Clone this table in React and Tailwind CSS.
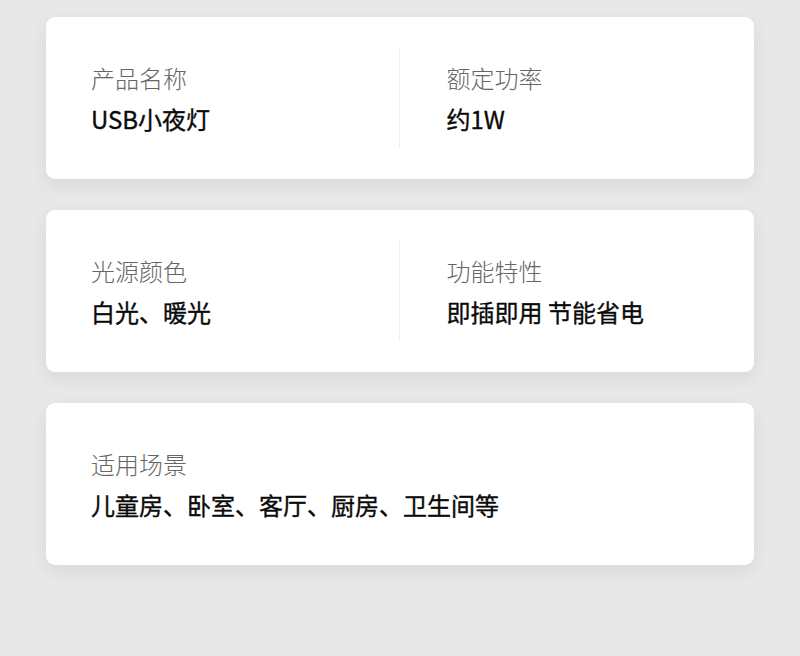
export default function App() {
  const font = { fontFamily: '"Noto Sans CJK SC", "Noto Sans", sans-serif' };
  const Item = ({ label, value, className }) => (
    <div className={"flex flex-col justify-center " + className}>
      <div className="text-[24px] leading-[41px] font-light text-[#666666]">{label}</div>
      <div className="text-[24px] leading-[41px] font-normal text-[#0a0a0a] [-webkit-text-stroke:0.35px_#0a0a0a]">{value}</div>
    </div>
  );
  return (
    <div className="w-[800px] h-[656px] bg-[#e8e8e8] pt-[17px]" style={font}>
      <div className="w-[708px] mx-auto flex flex-col gap-[31px]">
        <div className="h-[162px] bg-white rounded-[9px] shadow-[0_6px_18px_rgba(0,0,0,0.07)] flex items-center">
          <Item label="产品名称" value="USB小夜灯" className="flex-1 pl-[45px]" />
          <div className="w-px h-[100px] bg-[#eeeeee]" />
          <Item label="额定功率" value="约1W" className="flex-1 pl-[47px]" />
        </div>
        <div className="h-[162px] bg-white rounded-[9px] shadow-[0_6px_18px_rgba(0,0,0,0.07)] flex items-center">
          <Item label="光源颜色" value="白光、暖光" className="flex-1 pl-[45px]" />
          <div className="w-px h-[100px] bg-[#eeeeee]" />
          <Item label="功能特性" value="即插即用 节能省电" className="flex-1 pl-[47px]" />
        </div>
        <div className="h-[162px] bg-white rounded-[9px] shadow-[0_6px_18px_rgba(0,0,0,0.07)] flex items-center">
          <Item label="适用场景" value="儿童房、卧室、客厅、厨房、卫生间等" className="flex-1 pl-[45px]" />
        </div>
      </div>
    </div>
  );
}
